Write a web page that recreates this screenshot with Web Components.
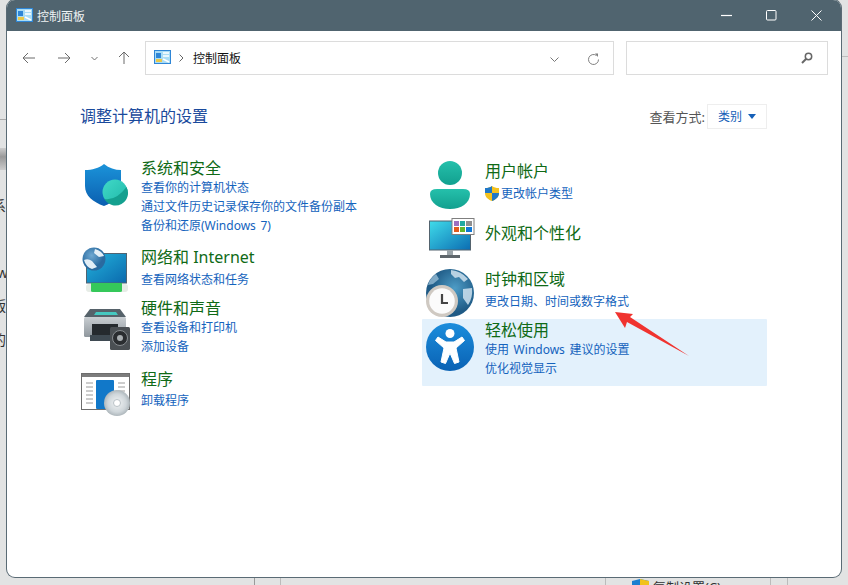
<!DOCTYPE html>
<html lang="zh-CN"><head><meta charset="utf-8">
<style>
html,body{margin:0;height:100%;overflow:hidden}
body{font-family:"Noto Sans","Noto Sans CJK SC",sans-serif;background:#e2e3e3}
</style></head><body>
<cp-desktop>
<cp-window title="控制面板">
  <cp-toolbar></cp-toolbar>
  <cp-content heading="调整计算机的设置">
    <div slot="left">
      <cp-category h="89" gap="0" title="系统和安全" links="查看你的计算机状态|通过文件历史记录保存你的文件备份副本|备份和还原(Windows 7)">
        <svg slot="icon" width="46" height="44" viewBox="0 0 46 44" style="margin:7px 0 0 3px">
          <defs><linearGradient id="sh" x1="0" y1="0" x2="0" y2="1"><stop offset="0" stop-color="#1b93d9"/><stop offset="1" stop-color="#0b5fb0"/></linearGradient>
          <linearGradient id="sb" x1="0" y1="0" x2="1" y2="1"><stop offset="0" stop-color="#41d9c8"/><stop offset="1" stop-color="#1fb8a8"/></linearGradient></defs>
          <path d="M20 0C25 4 31 6 37 6V22C37 32 30 38 20 42C9 38 1 32 1 22V6C8 6 15 4 20 0Z" fill="url(#sh)"/>
          <circle cx="31" cy="28" r="12.500" fill="url(#sb)"/>
          <path d="M20.500 35Q32 37 42.500 23A12.500 12.500 0 0 1 20.500 35Z" fill="#14a08f"/>
        </svg>
      </cp-category>
      <cp-category h="51" gap="3" title="网络和 Internet" links="查看网络状态和任务">
        <svg slot="icon" width="48" height="46" viewBox="0 0 48 46" style="margin:1px 0 0 0">
          <defs><linearGradient id="nm" x1="0" y1="0" x2="1" y2="1"><stop offset="0" stop-color="#23b3dc"/><stop offset="1" stop-color="#0b69ad"/></linearGradient>
          <radialGradient id="gl" cx=".4" cy=".35"><stop offset="0" stop-color="#6fa9d2"/><stop offset="1" stop-color="#2a6a9f"/></radialGradient></defs>
          <rect x="5.500" y="6.500" width="40" height="29.500" fill="url(#nm)" stroke="#4f6372"/>
          <rect x="5" y="37" width="42" height="8" rx="3" fill="#e6ece6"/>
          <path d="M10 36H41V44Q41 45 39 45H12Q10 45 10 44Z" fill="#35c85a"/>
          <circle cx="13" cy="12" r="11.500" fill="url(#gl)"/>
          <path d="M3 13Q7 11 11 14L16 20L11 22Q5 20 3 13ZM14 2Q21 4 23 9L18 10L13 6Z" fill="#e2eef6"/>
        </svg>
      </cp-category>
      <cp-category h="71" gap="0" title="硬件和声音" links="查看设备和打印机|添加设备">
        <svg slot="icon" width="48" height="42" viewBox="0 0 48 42" style="margin:12px 0 0 3px">
          <defs><linearGradient id="pr" x1="0" y1="0" x2="0" y2="1"><stop offset="0" stop-color="#c9ced2"/><stop offset="1" stop-color="#8f979d"/></linearGradient></defs>
          <path d="M6 0H36L42 8H0Z" fill="#56626a"/><path d="M12 3H32L34 6H10Z" fill="#45c8c0"/>
          <rect x="0" y="8" width="42" height="20" rx="1.500" fill="url(#pr)"/>
          <rect x="8" y="15" width="26" height="11" fill="#252a2e"/>
          <path d="M6 26H36V32H6Z" fill="#3f4a52"/>
          <rect x="26" y="18" width="20" height="23" rx="1.500" fill="#4a4f53"/>
          <circle cx="36" cy="29" r="7.500" fill="#2a2d30" stroke="#878c90"/>
          <circle cx="36" cy="29" r="3" fill="#a8adb0"/>
        </svg>
      </cp-category>
      <cp-category h="60" gap="2" title="程序" links="卸载程序">
        <svg slot="icon" width="50" height="43" viewBox="0 0 50 43" style="margin:5px 0 0 0">
          <defs><radialGradient id="cd"><stop offset="0" stop-color="#f2f4f5"/><stop offset=".7" stop-color="#cfd6da"/><stop offset="1" stop-color="#aeb7bc"/></radialGradient></defs>
          <rect x=".500" y=".500" width="48" height="36" fill="#fff" stroke="#6d6d6d"/>
          <rect x="1" y="1" width="47" height="3" fill="#7c7c7c"/>
          <rect x="15" y="7" width="18" height="29" rx="1" fill="#1178c9"/>
          <path d="M5 10H12M5 14H12M5 18H12M5 22H12M5 26H12M5 30H12M37 10H44M37 14H44M37 18H44" stroke="#9a9a9a"/>
          <circle cx="36" cy="30" r="13" fill="url(#cd)"/><circle cx="36" cy="30" r="3.500" fill="#fff" stroke="#b9c1c6"/>
        </svg>
      </cp-category>
    </div>
    <div slot="right">
      <cp-category h="65" gap="3" top="3" title="用户帐户" links="更改帐户类型" shield>
        <svg slot="icon" width="42" height="48" viewBox="0 0 42 48" style="margin:4px 0 0 4px">
          <defs><linearGradient id="us" x1="0" y1="0" x2="0" y2="1"><stop offset="0" stop-color="#25c0ab"/><stop offset="1" stop-color="#12a08f"/></linearGradient></defs>
          <circle cx="21" cy="12" r="12" fill="url(#us)"/>
          <path d="M8 28H34Q41 28 41 33C41 42 32 48 21 48C10 48 1 42 1 33Q1 28 8 28Z" fill="url(#us)"/>
        </svg>
      </cp-category>
      <cp-category h="46" gap="0" title="外观和个性化">
        <svg slot="icon" width="46" height="42" viewBox="0 0 46 42" style="margin:-4px 0 0 4px">
          <defs><linearGradient id="ap" x1="0" y1="0" x2="1" y2="1"><stop offset="0" stop-color="#3fdcea"/><stop offset="1" stop-color="#0b6cb2"/></linearGradient></defs>
          <rect x=".500" y="3" width="41" height="29" fill="url(#ap)" stroke="#53636e"/>
          <rect x="18" y="32" width="6" height="5" fill="#9aa3a8"/><rect x="11" y="37" width="20" height="3" fill="#5f666b"/>
          <rect x="23" y=".500" width="22" height="16" fill="#fff" stroke="#7f7f7f"/>
          <rect x="25" y="3" width="5" height="5" fill="#9d6fc0"/><rect x="31" y="3" width="5" height="5" fill="#20a9a1"/><rect x="37" y="3" width="6" height="5" fill="#8f8f8f"/>
          <rect x="25" y="9" width="5" height="5" fill="#e25a1c"/><rect x="31" y="9" width="5" height="5" fill="#62b62d"/><rect x="37" y="9" width="6" height="5" fill="#0e78d6"/>
        </svg>
      </cp-category>
      <cp-category h="51" gap="3" title="时钟和区域" links="更改日期、时间或数字格式">
        <svg slot="icon" width="50" height="49" viewBox="0 0 50 49" style="margin:1px 0 0 0">
          <defs><radialGradient id="ck" cx=".6" cy=".4"><stop offset="0" stop-color="#4d9cc6"/><stop offset="1" stop-color="#1f5a85"/></radialGradient></defs>
          <circle cx="25" cy="24" r="24" fill="url(#ck)"/>
          <path d="M26 1Q36 2 43 10L39 13L34 8L30 9L26 5ZM38 20L47 19Q48 29 43 36L38 29Z" fill="#cfe2ee" opacity=".85"/>
          <path d="M3 16Q5 9 11 5L14 10L8 15Z" fill="#a8cadf" opacity=".7"/>
          <circle cx="17" cy="32" r="16" fill="#cfc9c2"/><circle cx="17" cy="32" r="12.800" fill="#fbfbfb"/>
          <path d="M17 25V34H23" fill="none" stroke="#444" stroke-width="2.200"/>
        </svg>
      </cp-category>
      <cp-category h="67" gap="0" hi title="轻松使用" links="使用 Windows 建议的设置|优化视觉显示">
        <svg slot="icon" width="48" height="48" viewBox="0 0 48 48" style="margin:4px 0 0 1px">
          <defs><linearGradient id="ac" x1="0" y1="0" x2="0" y2="1"><stop offset="0" stop-color="#1b8ddc"/><stop offset="1" stop-color="#0a62b4"/></linearGradient></defs>
          <circle cx="24" cy="24" r="24" fill="url(#ac)"/>
          <circle cx="24" cy="10.500" r="4.500" fill="#fff"/>
          <path d="M12 14L20 19H28L36 14L38.500 17.500L30 25L33 39L28.500 40.500L24 30L19.500 40.500L15 39L18 25L9.500 17.500Z" fill="#fff" stroke="#fff" stroke-linejoin="round"/>
        </svg>
      </cp-category>
    </div>
  </cp-content>
</cp-window>
<svg width="848" height="585" viewBox="0 0 848 585" style="position:absolute;left:0;top:0;pointer-events:none">
  <path d="M615 312L633 314L630 317L689 356L627 322L625 328Z" fill="#f0332f"/>
</svg>
</cp-desktop>
<script>
const def=(n,html)=>{customElements.define(n,class extends HTMLElement{connectedCallback(){if(this.shadowRoot)return;this.attachShadow({mode:'open'}).innerHTML=typeof html==='function'?html(this):html;}})};
const cpIcon=`<svg width="17" height="15" viewBox="0 0 17 15"><rect x=".5" y=".5" width="16" height="13" fill="#a9dcf5" stroke="#2f86d6"/><rect x="2" y="9" width="6" height="3" fill="#e8c84a"/><rect x="2" y="3" width="5" height="5" fill="#2f86d6"/><path d="M9 3H15M9 6H15M9 9L15 12" stroke="#fff" stroke-width="1.500"/></svg>`;
def('cp-desktop',`<style>
:host{display:block;position:relative;width:848px;height:585px;overflow:hidden;background:#e2e3e3}
.t{position:absolute;font-size:14px;color:#333;line-height:16px}
.line{position:absolute;background:#9a9a9a}
</style>
<span class="t" style="left:-8px;top:198px">系</span>
<span class="t" style="left:-3px;top:265px">wi</span>
<span class="t" style="left:-8px;top:298px">版</span>
<span class="t" style="left:-8px;top:332px">的</span>
<div class="line" style="left:0;top:119px;width:7px;height:1px;background:#aaa"></div>
<div class="line" style="left:0;top:148px;width:7px;height:22px;background:linear-gradient(#ccc,#999 40%,#ccc)"></div>
<div class="line" style="left:841px;top:56px;width:7px;height:1px;background:#bdbdbd"></div>
<div class="line" style="left:254px;top:577px;width:1px;height:8px"></div>
<div class="line" style="left:280px;top:577px;width:1px;height:8px;background:#bbb"></div>
<div class="line" style="left:605px;top:577px;width:1px;height:8px;background:#bbb"></div>
<div class="line" style="left:770px;top:577px;width:1px;height:8px;background:#bbb"></div>
<div class="line" style="left:787px;top:577px;width:1px;height:8px;background:#bbb"></div>
<span class="t" style="left:653px;top:579px;font-size:13px">复制设置(C)...</span>
<svg style="position:absolute;left:632px;top:579px" width="17" height="6"><path d="M0 2L8 0L17 2V6H0Z" fill="#1a7fd0"/><path d="M8 0L17 2V6H8Z" fill="#f2c21a"/></svg>
<slot></slot>`);
def('cp-window',el=>`<style>
:host{display:flex;flex-direction:column;position:absolute;left:7px;top:0;width:834px;height:577px;background:#fff;border-radius:8px;overflow:hidden;box-shadow:0 0 0 1px #5a6b75;color:#000}
.bar{height:31px;flex:none;background:#50646f;display:flex;align-items:center;color:#eef2f3;font-size:12px}
.ic{margin-left:9px;display:flex}.tt{margin-left:4px}
.ctl{margin-left:auto;display:flex;align-items:center}
.ctl svg{display:block}
</style>
<div class="bar"><span class="ic">${cpIcon}</span><span class="tt">${el.getAttribute('title')}</span>
<span class="ctl"><svg width="11" height="3" style="margin-right:34px"><path d="M0 1.5H11" stroke="#fff" stroke-width="1.2"/></svg><svg width="11" height="11" style="margin-right:34px"><rect x=".5" y=".5" width="9.500" height="9.500" rx="1" fill="none" stroke="#fff"/></svg><svg width="11" height="11" style="margin-right:19px"><path d="M.5.5L10.500 10.500M10.500.5L.5 10.500" stroke="#fff"/></svg></span></div>
<slot></slot>`);
def('cp-toolbar',`<style>
:host{display:flex;align-items:center;height:34px;margin-top:10px;flex:none}
.b{display:flex;flex:none}
.addr,.search{box-sizing:border-box;height:34px;border:1px solid #dcdcdc;display:flex;align-items:center;background:#fff}
.addr{width:469px;margin-left:15px;font-size:12px;color:#111;padding-left:8px;padding-bottom:1px}
.search{width:202px;margin-left:12px;justify-content:flex-end;padding-right:14px}
.sep{margin:0 9px 0 8px;display:flex}
.r{margin-left:auto;display:flex;align-items:center}
</style>
<svg class="b" width="14" height="12" style="margin-left:15px" viewBox="0 0 14 12"><path d="M13 6H1M6 1L1 6L6 11" fill="none" stroke="#6b6b6b"/></svg>
<svg class="b" width="14" height="12" style="margin-left:21px" viewBox="0 0 14 12"><path d="M1 6H13M8 1L13 6L8 11" fill="none" stroke="#6b6b6b"/></svg>
<svg class="b" width="7" height="5" style="margin-left:20px" viewBox="0 0 7 5"><path d="M.5 1L3.500 4L6.500 1" fill="none" stroke="#707070"/></svg>
<svg class="b" width="12" height="14" style="margin-left:20px" viewBox="0 0 12 14"><path d="M6 13V1M1 6L6 1L11 6" fill="none" stroke="#6b6b6b"/></svg>
<div class="addr">${cpIcon}<span class="sep"><svg width="5" height="8" viewBox="0 0 5 8"><path d="M.5.5L4 4L.5 7.500" fill="none" stroke="#666"/></svg></span><span>控制面板</span>
<span class="r"><svg width="9" height="5" viewBox="0 0 9 5" style="margin-right:28px;margin-top:4px"><path d="M.5.5L4.500 4.500L8.500.5" fill="none" stroke="#777"/></svg><svg width="13" height="13" viewBox="0 0 13 13" style="margin-right:13px;margin-top:4px"><path d="M11.500 6.500A5 5 0 1 1 9.500 2.500" fill="none" stroke="#7f7f7f"/><path d="M8 .5L11 .5V4Z" fill="#7f7f7f"/></svg></span></div>
<div class="search"><svg width="12" height="12" viewBox="0 0 12 12"><circle cx="7.500" cy="4.500" r="3.200" fill="none" stroke="#666" stroke-width="1.500"/><path d="M5 7L1 11" stroke="#666" stroke-width="2"/></svg></div>`);
def('cp-content',el=>`<style>
:host{display:block;flex:1;padding:0 74px}
.head{display:flex;align-items:center;justify-content:space-between;height:28px;margin-top:27px}
h1{margin:0;font-size:16px;font-weight:400;color:#1a4a9c;line-height:28px;margin-left:-1px}
.view{display:flex;align-items:center;font-size:13px;color:#555}
.sel{box-sizing:border-box;height:25px;width:60px;margin-left:2px;border:1px solid #eee;display:flex;align-items:center;padding-left:10px;color:#1560b8;font-size:12px;gap:6px}
.sel i{border:4px solid transparent;border-top:5px solid #1560b8;border-bottom:0;display:block}
.cols{display:grid;grid-template-columns:344px 342px;margin-top:27px}
</style>
<div class="head"><h1>${el.getAttribute('heading')}</h1><div class="view">查看方式:<span class="sel">类别<i></i></span></div></div>
<div class="cols"><slot name="left"></slot><slot name="right"></slot></div>`);
def('cp-category',el=>{
 const links=(el.getAttribute('links')||'').split('|').filter(Boolean);
 const gap=el.getAttribute('gap')||0, top=el.getAttribute('top')||0;
 return `<style>
:host{display:flex;height:${el.getAttribute('h')}px;box-sizing:border-box;${el.hasAttribute('hi')?'background:#e3f1fc;margin-left:-3px;padding-left:3px;border-radius:1px;':''}}
.i{width:60px;flex:none}
.t{font-size:16px;line-height:22px;color:#0f6a16;padding-top:${top}px;white-space:nowrap}
.l{font-size:12px;line-height:19px;color:#1463bd;white-space:pre;word-spacing:1.5px;display:flex;align-items:center;gap:2px}
.links{padding-top:${gap}px;margin-top:-1px}
</style>
<div class="i"><slot name="icon"></slot></div>
<div><div class="t">${el.getAttribute('title')}</div><div class="links">${links.map((l,i)=>`<div class="l">${el.hasAttribute('shield')&&i==0?'<svg width="14" height="15" viewBox="0 0 14 15"><path d="M7 0C9 1.500 11 2 14 2V7C14 11 11 13.500 7 15C3 13.500 0 11 0 7V2C3 2 5 1.500 7 0Z" fill="#f4c21e"/><path d="M7 0V7H0V2C3 2 5 1.500 7 0ZM7 7H14C14 11 11 13.500 7 15Z" fill="#1f78c8"/></svg>':''}<span>${l}</span></div>`).join('')}</div></div>`;
});
</script>
</body></html>
